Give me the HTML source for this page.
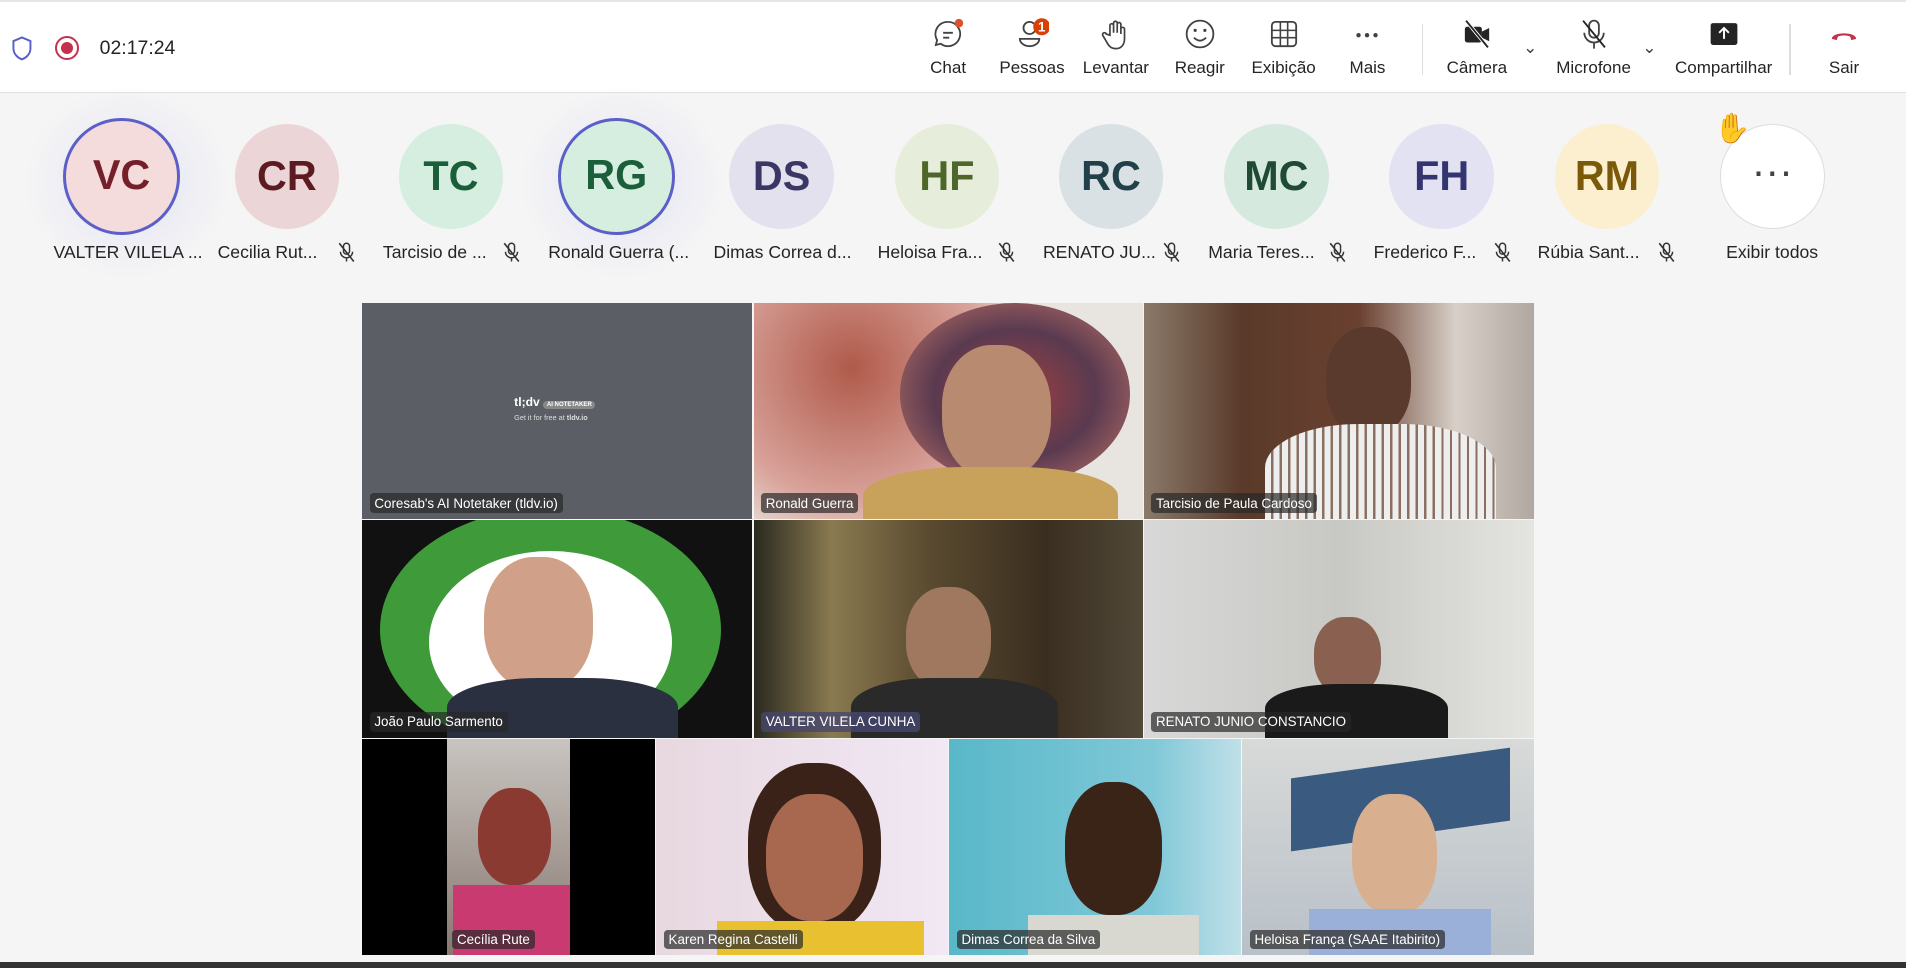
<!DOCTYPE html>
<html><head><meta charset="utf-8"><style>
html,body{margin:0;padding:0;background:#f5f5f5;overflow:hidden}
#w{zoom:1.21556;width:1568px;height:796px;position:relative;font-family:"Liberation Sans",sans-serif;background:#f5f5f5}
.top{position:absolute;left:0;top:0;width:1568px;height:74px;background:#fff;border-top:2px solid #e6e6e6;border-bottom:1px solid #e0e0e0}
.btn{position:absolute;top:12px;width:70px;text-align:center;font-size:14px;color:#242424}
.btn svg{display:block;margin:0 auto 6px;width:28px;height:28px}
.av{position:absolute;top:102px;width:86px;height:86px;border-radius:50%;font-size:34px;text-align:center;line-height:86px;box-sizing:border-box;font-weight:bold}
.nm{position:absolute;top:199px;font-size:14.5px;color:#242424;white-space:nowrap}
.mic{position:absolute;top:199px;width:14px;height:17px}
.t{position:absolute;overflow:hidden}
.lb{position:absolute;left:6px;bottom:5px;background:rgba(40,40,40,.7);color:#fff;font-size:11px;padding:2px 4px;border-radius:3px;white-space:nowrap}
</style></head><body><div id="w">
<svg width="0" height="0" style="position:absolute"><defs><g id="m"><rect x="4.5" y="1" width="5" height="9" rx="2.5" fill="none" stroke="#333" stroke-width="1.2"/><path d="M2 8a5 5 0 0 0 10 0M7 13v3" fill="none" stroke="#333" stroke-width="1.2"/><path d="M1 1l12 15" stroke="#333" stroke-width="1.3"/></g></defs></svg>
<div class="top">
<svg style="position:absolute;left:9px;top:27px" width="18" height="22" viewBox="0 0 18 22"><path d="M9 2 L16 5 V11 C16 16 12 19 9 20 C6 19 2 16 2 11 V5 Z" fill="none" stroke="#5b5fc7" stroke-width="1.6"/></svg>
<div style="position:absolute;left:45px;top:28px;width:20px;height:20px;border-radius:50%;border:2px solid #c4314b;box-sizing:border-box"></div>
<div style="position:absolute;left:50px;top:33px;width:10px;height:10px;border-radius:50%;background:#c4314b"></div>
<div style="position:absolute;left:82px;top:29px;font-size:16px;color:#242424">02:17:24</div>
<div class="btn" style="left:745px"><svg viewBox="0 0 28 28"><path d="M14 4a10 10 0 1 1-6 18l-4 1 1-4A10 10 0 0 1 14 4z" fill="none" stroke="#424242" stroke-width="1.5"/><path d="M10 13h8M10 17h5" stroke="#424242" stroke-width="1.5"/><circle cx="23" cy="5" r="3.5" fill="#e0502a"/></svg>Chat</div>
<div class="btn" style="left:814px"><svg viewBox="0 0 28 28"><circle cx="12" cy="9" r="5" fill="none" stroke="#424242" stroke-width="1.5"/><path d="M4 18h16a8 6 0 0 1-16 0z" fill="none" stroke="#424242" stroke-width="1.5"/><circle cx="22" cy="8" r="7" fill="#d74108"/><text x="22" y="12" font-size="11" fill="#fff" text-anchor="middle" font-family="Liberation Sans" font-weight="bold">1</text></svg>Pessoas</div>
<div class="btn" style="left:883px"><svg viewBox="0 0 28 28"><path d="M9 15V7a1.5 1.5 0 0 1 3 0v6V5a1.5 1.5 0 0 1 3 0v8V6a1.5 1.5 0 0 1 3 0v8-4a1.5 1.5 0 0 1 3 0v8c0 5-3 8-7 8s-6-2-8-6l-3-5a1.5 1.5 0 0 1 3-1z" fill="none" stroke="#424242" stroke-width="1.4"/></svg>Levantar</div>
<div class="btn" style="left:952px"><svg viewBox="0 0 28 28"><circle cx="14" cy="14" r="11" fill="none" stroke="#424242" stroke-width="1.5"/><circle cx="10" cy="11" r="1.3" fill="#424242"/><circle cx="18" cy="11" r="1.3" fill="#424242"/><path d="M9 17q5 5 10 0" fill="none" stroke="#424242" stroke-width="1.5"/></svg>Reagir</div>
<div class="btn" style="left:1021px"><svg viewBox="0 0 28 28"><rect x="4" y="4" width="20" height="20" rx="3" fill="none" stroke="#424242" stroke-width="1.5"/><path d="M4 11h20M4 17h20M11 4v20M17 4v20" stroke="#424242" stroke-width="1.3"/></svg>Exibição</div>
<div class="btn" style="left:1090px"><svg viewBox="0 0 28 28"><circle cx="7" cy="15" r="1.8" fill="#424242"/><circle cx="14" cy="15" r="1.8" fill="#424242"/><circle cx="21" cy="15" r="1.8" fill="#424242"/></svg>Mais</div>
<div style="position:absolute;left:1170px;top:18px;width:1px;height:42px;background:#ddd"></div>
<div class="btn" style="left:1180px"><svg viewBox="0 0 28 28"><rect x="4" y="8" width="14" height="13" rx="2" fill="#242424"/><path d="M18 12l6-3v11l-6-3z" fill="#242424"/><path d="M5 3l18 22" stroke="#fff" stroke-width="3"/><path d="M5 3l18 22" stroke="#242424" stroke-width="1.5"/></svg>Câmera</div>
<div style="position:absolute;left:1253px;top:30px;font-size:14px;color:#424242">&#8964;</div>
<div class="btn" style="left:1276px"><svg viewBox="0 0 28 28"><rect x="10" y="3" width="8" height="14" rx="4" fill="none" stroke="#424242" stroke-width="1.5"/><path d="M6 13a8 8 0 0 0 16 0M14 21v5" fill="none" stroke="#424242" stroke-width="1.5"/><path d="M5 3l18 22" stroke="#242424" stroke-width="1.5"/></svg>Microfone</div>
<div style="position:absolute;left:1351px;top:30px;font-size:14px;color:#424242">&#8964;</div>
<div class="btn" style="left:1375px;width:86px"><svg viewBox="0 0 28 28"><rect x="3" y="5" width="22" height="18" rx="2" fill="#242424"/><path d="M14 18V10M10 13l4-4 4 4" fill="none" stroke="#fff" stroke-width="1.6"/></svg>Compartilhar</div>
<div style="position:absolute;left:1472px;top:18px;width:1px;height:42px;background:#ddd"></div>
<div class="btn" style="left:1482px"><svg viewBox="0 0 28 28"><path d="M4 18c0-6 20-6 20 0l-4 1-1-3c-3-1-7-1-10 0l-1 3z" fill="#c4314b"/></svg>Sair</div>
</div>

<div style="position:absolute;left:20px;top:70px;width:170px;height:160px;background:radial-gradient(#e2e2f4,transparent 70%)"></div>
<div style="position:absolute;left:427px;top:70px;width:170px;height:160px;background:radial-gradient(#e2e2f4,transparent 70%)"></div>
<div class="av" style="left:52px;top:97px;width:96px;height:96px;line-height:90px;background:#f4dcdc;color:#751f2a;border:3px solid #5b5fc7">VC</div>
<div class="av" style="left:193px;background:#ecd5d7;color:#5c1a21">CR</div>
<div class="av" style="left:328px;background:#d6eee0;color:#1a5e3a">TC</div>
<div class="av" style="left:459px;top:97px;width:96px;height:96px;line-height:90px;background:#d6eee0;color:#1a5e3a;border:3px solid #5b5fc7">RG</div>
<div class="av" style="left:600px;background:#e4e1ef;color:#3b3764">DS</div>
<div class="av" style="left:736px;background:#e6eedb;color:#4d6629">HF</div>
<div class="av" style="left:871px;background:#d9e1e4;color:#22404a">RC</div>
<div class="av" style="left:1007px;background:#d6e9df;color:#1f4a33">MC</div>
<div class="av" style="left:1143px;background:#e2e2f2;color:#343470">FH</div>
<div class="av" style="left:1279px;background:#fbefcf;color:#7a5a0a">RM</div>
<div class="av" style="left:1415px;background:#fff;border:1px solid #ddd;color:#424242;line-height:76px;font-weight:normal">···</div>
<div style="position:absolute;left:1410px;top:92px;font-size:24px">✋</div>
<div class="nm" style="left:44px">VALTER VILELA ...</div>
<div class="nm" style="left:179px">Cecilia Rut...</div><svg class="mic" style="left:278px"><use href="#m"/></svg>
<div class="nm" style="left:315px">Tarcisio de ...</div><svg class="mic" style="left:414px"><use href="#m"/></svg>
<div class="nm" style="left:451px">Ronald Guerra (...</div>
<div class="nm" style="left:587px">Dimas Correa d...</div>
<div class="nm" style="left:722px">Heloisa Fra...</div><svg class="mic" style="left:821px"><use href="#m"/></svg>
<div class="nm" style="left:858px">RENATO JU...</div><svg class="mic" style="left:957px"><use href="#m"/></svg>
<div class="nm" style="left:994px">Maria Teres...</div><svg class="mic" style="left:1093px"><use href="#m"/></svg>
<div class="nm" style="left:1130px">Frederico F...</div><svg class="mic" style="left:1229px"><use href="#m"/></svg>
<div class="nm" style="left:1265px">Rúbia Sant...</div><svg class="mic" style="left:1364px"><use href="#m"/></svg>
<div class="nm" style="left:1420px">Exibir todos</div>

<div class="t" style="left:298px;top:249px;width:321px;height:178px;background:#5c5e66">
<div style="position:absolute;left:125px;top:76px;color:#fff;font-size:10px;font-weight:bold">tl;dv <span style="background:#888;font-size:5px;padding:1px 3px;border-radius:4px">AI NOTETAKER</span></div>
<div style="position:absolute;left:125px;top:91px;color:#ddd;font-size:6px">Get it for free at <b>tldv.io</b></div>
<div class="lb">Coresab's AI Notetaker (tldv.io)</div></div>
<div class="t" style="left:620px;top:249px;width:320px;height:178px;background:radial-gradient(circle at 25% 30%,#b05a4a,#d8a29a 40%,#e8e4e0 60%),#ddd">
<div style="position:absolute;left:120px;top:0;width:190px;height:150px;border-radius:50%;background:radial-gradient(#a04040,#5a3a50,#c87868)"></div>
<div style="position:absolute;left:155px;top:35px;width:90px;height:110px;border-radius:45%;background:#b88a70"></div>
<div style="position:absolute;left:90px;top:135px;width:210px;height:60px;border-radius:40% 40% 0 0;background:#c8a25a"></div>
<div class="lb">Ronald Guerra</div></div>
<div class="t" style="left:941px;top:249px;width:321px;height:178px;background:linear-gradient(90deg,#8a7a6a,#5a3a2a 25%,#6a4030 55%,#d8d0c8 80%,#b0a8a0)">
<div style="position:absolute;left:150px;top:20px;width:70px;height:90px;border-radius:45%;background:#5a3a2c"></div>
<div style="position:absolute;left:100px;top:100px;width:190px;height:90px;border-radius:40% 40% 0 0;background:repeating-linear-gradient(90deg,#eee 0 5px,#8a7060 5px 7px)"></div>
<div class="lb">Tarcisio de Paula Cardoso</div></div>
<div class="t" style="left:298px;top:428px;width:321px;height:179px;background:#111">
<div style="position:absolute;left:15px;top:-10px;width:280px;height:200px;border-radius:50%;background:#3f9a3a"></div>
<div style="position:absolute;left:55px;top:25px;width:200px;height:150px;border-radius:50%;background:#fff"></div>
<div style="position:absolute;left:100px;top:30px;width:90px;height:110px;border-radius:45%;background:#d0a088"></div>
<div style="position:absolute;left:70px;top:130px;width:190px;height:60px;border-radius:40% 40% 0 0;background:#2a3040"></div>
<div class="lb">João Paulo Sarmento</div></div>
<div class="t" style="left:620px;top:428px;width:320px;height:179px;background:linear-gradient(90deg,#2a2a20,#8a7a50 20%,#5a4a30 45%,#3a2e20 75%,#504838)">
<div style="position:absolute;left:125px;top:55px;width:70px;height:85px;border-radius:45%;background:#a07860"></div>
<div style="position:absolute;left:80px;top:130px;width:170px;height:60px;border-radius:40% 40% 0 0;background:#2a2a2a"></div>
<div class="lb" style="background:rgba(70,70,110,.8)">VALTER VILELA CUNHA</div></div>
<div class="t" style="left:941px;top:428px;width:321px;height:179px;background:linear-gradient(90deg,#d8d8d8,#c8c8c4 50%,#e4e4e0)">
<div style="position:absolute;left:140px;top:80px;width:55px;height:65px;border-radius:45%;background:#8a6050"></div>
<div style="position:absolute;left:100px;top:135px;width:150px;height:50px;border-radius:40% 40% 0 0;background:#1a1a1a"></div>
<div class="lb">RENATO JUNIO CONSTANCIO</div></div>
<div class="t" style="left:298px;top:608px;width:241px;height:178px;background:#000">
<div style="position:absolute;left:70px;top:0;width:101px;height:178px;background:linear-gradient(#c8c4c0,#887870)"></div>
<div style="position:absolute;left:95px;top:40px;width:60px;height:80px;border-radius:45%;background:#8a3a30"></div>
<div style="position:absolute;left:75px;top:120px;width:96px;height:60px;background:#c83a70"></div>
<div class="lb" style="left:74px">Cecília Rute</div></div>
<div class="t" style="left:540px;top:608px;width:240px;height:178px;background:linear-gradient(90deg,#e8d8e0,#f0e8f4)">
<div style="position:absolute;left:75px;top:20px;width:110px;height:140px;border-radius:45%;background:#3a2218"></div>
<div style="position:absolute;left:90px;top:45px;width:80px;height:105px;border-radius:45%;background:#a86850"></div>
<div style="position:absolute;left:50px;top:150px;width:170px;height:40px;background:#e8c030"></div>
<div class="lb">Karen Regina Castelli</div></div>
<div class="t" style="left:781px;top:608px;width:240px;height:178px;background:linear-gradient(90deg,#58b8c8,#80c8d8 70%,#c0e0e8)">
<div style="position:absolute;left:95px;top:35px;width:80px;height:110px;border-radius:45%;background:#3a2418"></div>
<div style="position:absolute;left:65px;top:145px;width:140px;height:40px;background:#d8d8d0"></div>
<div class="lb">Dimas Correa da Silva</div></div>
<div class="t" style="left:1022px;top:608px;width:240px;height:178px;background:linear-gradient(#d8dad8,#b8c0c8)">
<div style="position:absolute;left:40px;top:20px;width:180px;height:60px;background:#3a5a80;transform:skewY(-8deg)"></div>
<div style="position:absolute;left:90px;top:45px;width:70px;height:100px;border-radius:45%;background:#d8b090"></div>
<div style="position:absolute;left:55px;top:140px;width:150px;height:45px;background:#9ab0d8"></div>
<div class="lb">Heloisa França (SAAE Itabirito)</div></div>
<div style="position:absolute;left:0;top:791px;width:1568px;height:5px;background:#333"></div>
</div></body></html>
